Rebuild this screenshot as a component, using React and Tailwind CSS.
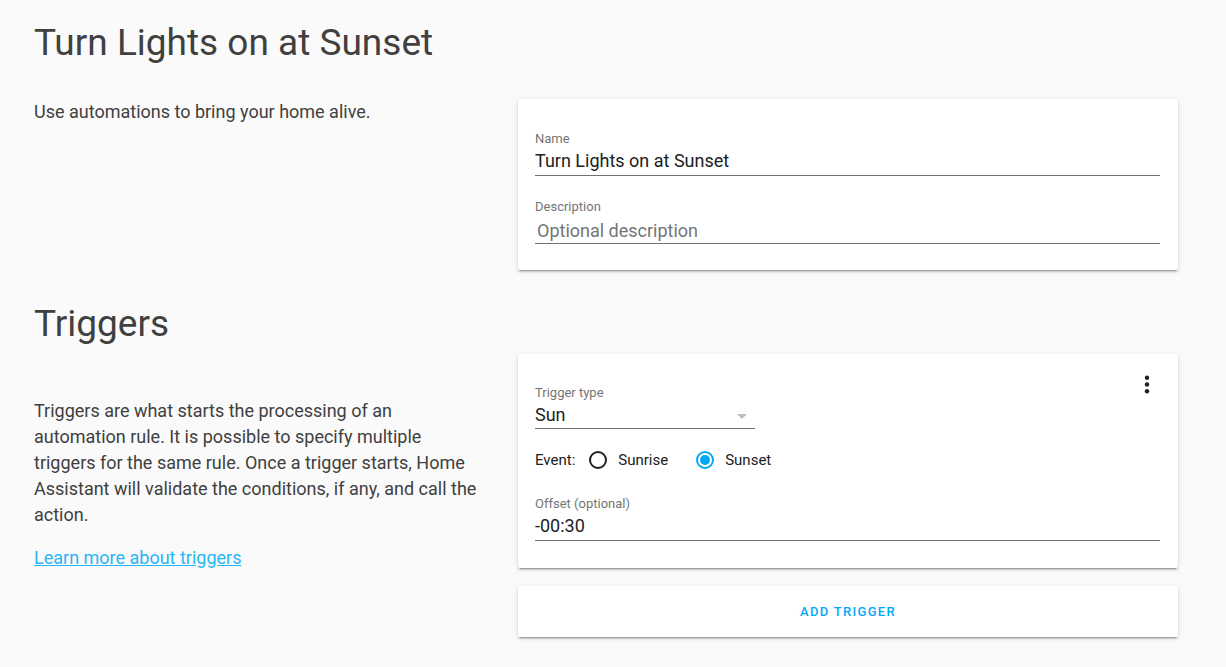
import { useState } from "react";

const CARD =
  "rounded-[2px] bg-white shadow-[0_2px_2px_0_rgba(0,0,0,0.14),0_1px_5px_0_rgba(0,0,0,0.12),0_3px_1px_-2px_rgba(0,0,0,0.2)]";
const LABEL = "block text-[13px] leading-5 text-[#757575]";
const LINE = "border-b border-[#737373] bg-transparent text-[#212121] outline-none";

function Section({ title, intro, gap, children }) {
  return (
    <section>
      <h1 className="text-[37px] leading-[44px] text-[#404040]">{title}</h1>
      <div className={gap}>
        <div className="grid grid-cols-[37fr_55fr] gap-10">
          {intro}
          <div className="flex flex-col gap-[18px]">{children}</div>
        </div>
      </div>
    </section>
  );
}

function Field({ id, label, value }) {
  return (
    <div>
      <label htmlFor={id} className={LABEL}>{label}</label>
      <input id={id} defaultValue={value} className={`block h-[27px] w-full pb-1 text-[18px] leading-6 ${LINE}`} />
    </div>
  );
}

function Radio({ label, checked, onChange }) {
  return (
    <label className="flex items-center gap-[11px]">
      <input
        type="radio"
        name="event"
        checked={checked}
        onChange={onChange}
        className="grid size-[18px] appearance-none place-items-center rounded-full border-2 border-[#212121] before:size-[10px] before:rounded-full checked:border-[#03a9f4] checked:before:bg-[#03a9f4]"
      />
      {label}
    </label>
  );
}

export default function App() {
  const [event, setEvent] = useState("sunset");

  return (
    <main className="flex min-h-screen flex-col gap-8 bg-[#fafafa] pt-[21px] pr-12 pb-7 pl-[34px] font-['Roboto',sans-serif] text-[#404040]">
      <Section
        title="Turn Lights on at Sunset"
        gap="pt-[34px]"
        intro={<p className="text-[18px] leading-[26px]">Use automations to bring your home alive.</p>}
      >
        <div className={`${CARD} flex flex-col gap-[21px] pt-[30px] pr-[18px] pb-[26px] pl-[17px]`}>
          <Field id="name" label="Name" value="Turn Lights on at Sunset" />
          <div>
            <label htmlFor="description" className={LABEL}>Description</label>
            <textarea
              id="description"
              rows={1}
              placeholder="Optional description"
              className={`block h-[27px] w-full resize-none overflow-hidden px-[2px] pt-[2px] text-[18px] leading-6 placeholder:text-[#757575] ${LINE}`}
            />
          </div>
        </div>
      </Section>

      <Section
        title="Triggers"
        gap="pt-2"
        intro={
          <div className="flex flex-col gap-[17px] pt-11 text-[18px] leading-[26px]">
            <p>
              Triggers are what starts the processing of an automation rule. It is possible to specify multiple
              triggers for the same rule. Once a trigger starts, Home Assistant will validate the conditions, if any,
              and call the action.
            </p>
            <a href="#triggers" className="self-start text-[#29b6f6] underline">Learn more about triggers</a>
          </div>
        }
      >
        <div className={`${CARD} pt-[17px] pr-[18px] pb-[27px] pl-[17px]`}>
          <div className="flex items-start justify-between">
            <div className="pt-3">
              <label htmlFor="type" className={LABEL}>Trigger type</label>
              <div className={`grid h-[26px] w-[220px] items-center ${LINE}`}>
                <select
                  id="type"
                  className="col-start-1 row-start-1 w-full appearance-none pb-1 text-[18px] leading-6 outline-none"
                >
                  <option>Sun</option>
                </select>
                <svg viewBox="0 0 10 5" className="pointer-events-none col-start-1 row-start-1 mr-2 mb-[2px] h-[5px] w-[10px] justify-self-end fill-[#bdbdbd]">
                  <path d="M0 0h10L5 5z" />
                </svg>
              </div>
            </div>
            <button type="button" aria-label="Menu" className="text-[#212121]">
              <svg viewBox="0 0 26 26" className="size-[26px] fill-current">
                <circle cx="13" cy="6.7" r="2.2" />
                <circle cx="13" cy="13.5" r="2.2" />
                <circle cx="13" cy="20.3" r="2.2" />
              </svg>
            </button>
          </div>
          <div role="radiogroup" aria-label="Event" className="flex items-center pt-[21px] pb-6 text-[15px] leading-5 text-[#212121]">
            <span className="pr-[14px]">Event:</span>
            <div className="flex gap-7">
              <Radio label="Sunrise" checked={event === "sunrise"} onChange={() => setEvent("sunrise")} />
              <Radio label="Sunset" checked={event === "sunset"} onChange={() => setEvent("sunset")} />
            </div>
          </div>
          <Field id="offset" label="Offset (optional)" value="-00:30" />
        </div>
        <button type="button" className={`${CARD} h-[51px] w-full text-[13px] font-medium tracking-widest text-[#03a9f4] uppercase`}>
          Add trigger
        </button>
      </Section>
    </main>
  );
}
